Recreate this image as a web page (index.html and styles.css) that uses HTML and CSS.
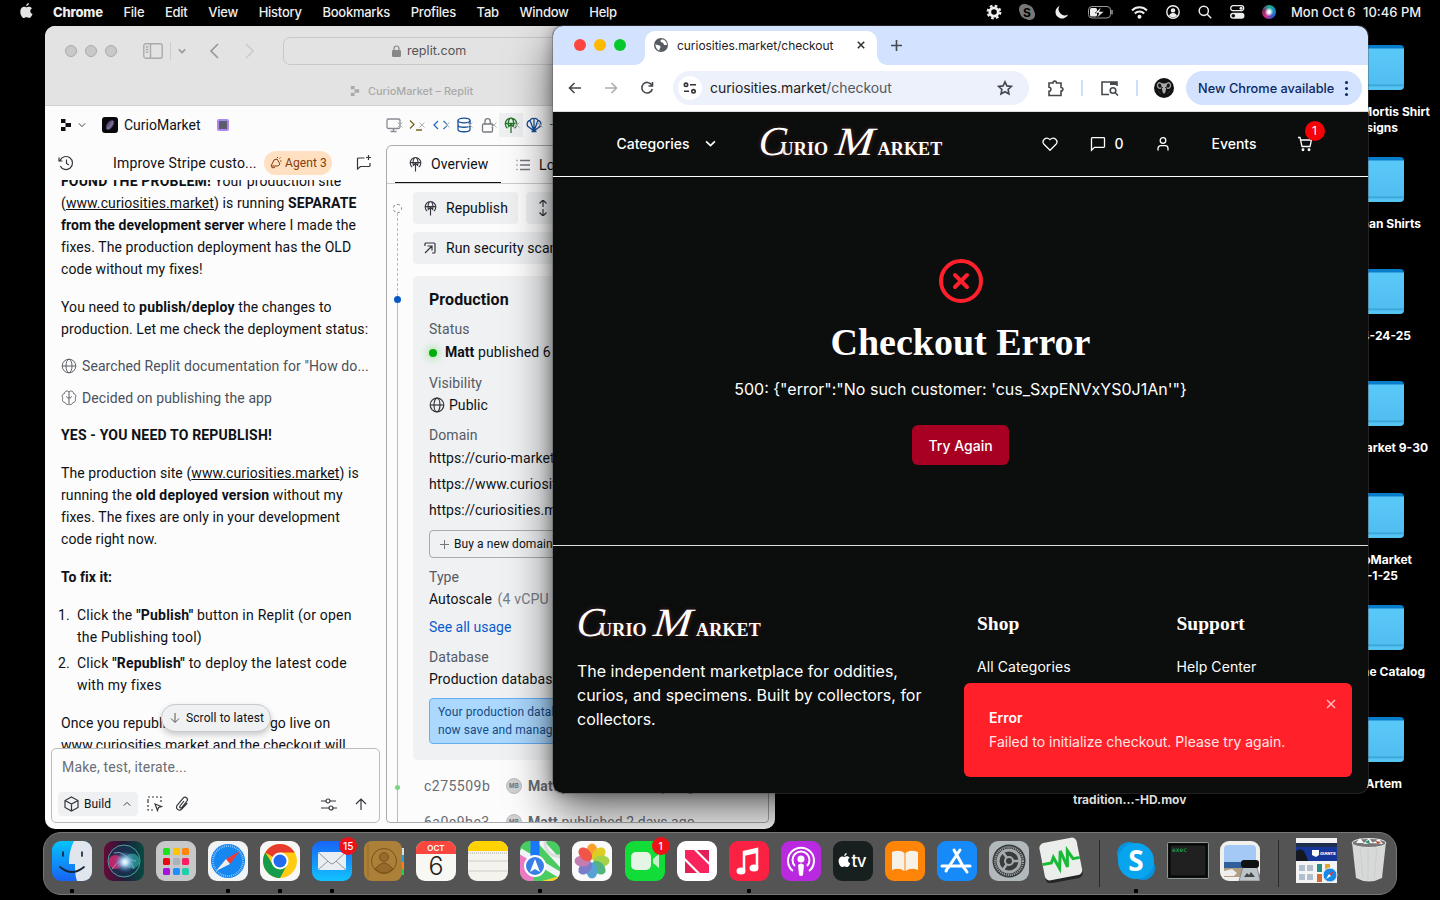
FILE: index.html
```html
<!DOCTYPE html>
<html lang="en">
<head>
<meta charset="utf-8">
<title>Desktop</title>
<link rel="stylesheet" href="styles.css">
</head>
<body>
<svg class="defs" width="0" height="0">
  <defs>
    <symbol id="apple" viewBox="0 0 14 17"><path d="M9.6 0c.1 1.700-1.300 3.300-2.900 3.300C6.500 1.700 8 .2 9.600 0zM7 4.500c.6 0 1.500-.7 2.800-.7 1.300 0 2.500.7 3.100 1.700-2.700 1.600-2.200 5.200.6 6.200-.5 1.500-2 4.300-3.600 4.300-1.200 0-1.500-.7-2.800-.7s-1.700.7-2.800.7C2.300 16 .3 12.300.3 9.200c0-3.300 2.100-5.300 4.200-5.300 1.200 0 2 .6 2.500.6z" fill="currentColor"/></symbol>
    <symbol id="chev" viewBox="0 0 10 10"><path d="M1 3l4 4 4-4"/></symbol>
    <symbol id="x" viewBox="0 0 10 10"><path d="M1 1l8 8M9 1l-8 8"/></symbol>
    <symbol id="globe" viewBox="0 0 16 16"><circle cx="8" cy="8" r="6.800"/><ellipse cx="8" cy="8" rx="3" ry="6.800"/><path d="M1.200 8h13.600"/></symbol>
    <symbol id="deploy" viewBox="0 0 16 16"><path d="M4.500 11.300A5.700 5.700 0 1 1 11.500 11.300M8 16V7.500M5.300 10l2.700-2.700 2.700 2.700M2.300 6.500h11.400M5.600 9C4.600 4.500 6.500 1 8 1s3.400 3.500 2.400 8"/></symbol>
    <symbol id="replit" viewBox="0 0 12 14"><path d="M1 1h4.500v4H1zM5.500 5H11v4H5.500zM1 9h4.500v4H1z" fill="currentColor"/></symbol>
  </defs>
</svg>

<header class="menubar">
  <svg class="apple" width="13" height="16"><use href="#apple"/></svg>
  <nav class="menus"><b>Chrome</b><span>File</span><span>Edit</span><span>View</span><span>History</span><span>Bookmarks</span><span>Profiles</span><span>Tab</span><span>Window</span><span>Help</span></nav>
  <div class="status">
    <svg width="16" height="16" viewBox="0 0 16 16"><circle cx="8" cy="8" r="4.200" fill="none" stroke="#eee" stroke-width="2.800"/><circle cx="8" cy="8" r="6.300" fill="none" stroke="#eee" stroke-width="2.200" stroke-dasharray="2.600 2.350"/></svg>
    <svg width="16" height="16" viewBox="0 0 16 16"><rect width="11" height="11" rx="5" fill="#777"/><rect x="5" y="5" width="11" height="11" rx="5" fill="#777"/><circle cx="8" cy="8" r="7" fill="#777"/><text x="8" y="12.500" text-anchor="middle" font-family="Inter" font-weight="700" font-size="12" fill="#000">S</text></svg>
    <svg width="14" height="14" viewBox="0 0 14 14"><path d="M4.500 1A6.500 6.500 0 1 0 13 9.500 6.200 6.200 0 0 1 4.500 1z" fill="#eee"/></svg>
    <svg width="26" height="13" viewBox="0 0 26 13"><rect x=".5" y=".5" width="22" height="11.500" rx="3.500" fill="none" stroke="#999"/><rect x="2" y="2" width="7" height="8.500" rx="1.500" fill="#eee"/><path d="M13 1L7 7h4l-2 5 7-6.500h-4.500z" fill="#eee" stroke="#000" stroke-width=".5"/><path d="M24 4v4.500" stroke="#999" stroke-width="1.500"/></svg>
    <svg width="17" height="13" viewBox="0 0 17 13" fill="none" stroke="#eee" stroke-width="2"><path d="M1 4.500a10.500 10.500 0 0 1 15 0M3.800 7.500a6.500 6.500 0 0 1 9.400 0"/><circle cx="8.500" cy="10.800" r="1"/></svg>
    <svg width="14" height="14" viewBox="0 0 14 14"><g fill="#eee"><circle cx="7" cy="7" r="6.200" fill="none" stroke="#eee" stroke-width="1.400"/><circle cx="7" cy="5.400" r="2.200"/><path d="M3 10.800a4.200 4.200 0 0 1 8 0A6 6 0 0 1 3 10.800z"/></g></svg>
    <svg width="14" height="14" viewBox="0 0 14 14" fill="none" stroke="#eee" stroke-width="1.500"><circle cx="5.800" cy="5.800" r="4.600"/><path d="M9.200 9.200l4 4"/></svg>
    <svg width="15" height="14" viewBox="0 0 15 14"><rect x=".7" y=".7" width="13" height="5" rx="2.500" fill="none" stroke="#eee" stroke-width="1.300"/><circle cx="11" cy="3.200" r="1.500" fill="#eee"/><rect y="7.800" width="14.500" height="6" rx="3" fill="#eee"/><circle cx="3.300" cy="10.800" r="1.800" fill="#111"/></svg>
    <i class="siri"></i>
  </div>
  <span class="date">Mon Oct 6</span><span class="clock">10:46 PM</span>
</header>

<!-- desktop items -->
<div class="folders">
  <div class="item"><i></i><span style="margin-right:10px">Mortis Shirt</span><span style="margin-right:42px">Designs</span></div>
  <div class="item"><i></i><span style="margin-right:19px">Urban Shirts</span></div>
  <div class="item"><i></i><span style="margin-right:29px">4-24-25</span></div>
  <div class="item"><i></i><span style="margin-right:12px">Market 9-30</span></div>
  <div class="item"><i></i><span style="margin-right:28px">CurioMarket</span><span style="margin-right:42px">10-1-25</span></div>
  <div class="item"><i></i><span style="margin-right:15px">The Catalog</span></div>
  <div class="item"><i></i><span style="margin-right:38px">Artem</span></div>
</div>
<div class="file-label">tradition...-HD.mov</div>

<section class="safari">
  <div class="s-chrome">
    <div class="s-bar">
      <div class="s-lights"><i></i><i></i><i></i></div>
      <svg class="s-side" width="20" height="16" viewBox="0 0 20 16" fill="none" stroke="#aaa" stroke-width="1.400"><rect x=".8" y=".8" width="18.400" height="14.400" rx="2"/><path d="M7.500 1v14M2.800 4h2.500M2.800 6.500h2.500M2.800 9h2.500" /></svg>
      <i class="s-div"></i>
      <svg class="s-chev" width="8" height="8" stroke="#999"><use href="#chev"/></svg>
      <svg class="s-back" width="10" height="16" viewBox="0 0 10 16"><path d="M9 1L2 8l7 7" fill="none" stroke="#999" stroke-width="1.700"/></svg>
      <svg class="s-fwd" width="10" height="16" viewBox="0 0 10 16"><path d="M1 1l7 7-7 7" fill="none" stroke="#ccc" stroke-width="1.700"/></svg>
      <div class="s-url"><svg width="9" height="12" viewBox="0 0 9 12"><rect y="5" width="9" height="7" rx="1.300" fill="#888"/><path d="M2 6V3.500a2.500 2.500 0 0 1 5 0V6" fill="none" stroke="#888" stroke-width="1.200"/></svg>replit.com</div>
    </div>
    <div class="s-tab"><svg width="10" height="12"><use href="#replit"/></svg>CurioMarket – Replit</div>
  </div>
  <div class="r-top">
    <svg class="r-logo" width="12" height="14"><use href="#replit"/></svg>
    <svg class="r-chev ln" width="8" height="8"><use href="#chev"/></svg>
    <svg class="r-app" width="16" height="16" viewBox="0 0 16 16"><rect width="16" height="16" rx="3" fill="#08080c"/><ellipse cx="8" cy="8" rx="3" ry="5.500" transform="rotate(35 8 8)" fill="#5b4c78"/><path d="M5 12L11 4M6.500 12l4.700-6" stroke="#a99bc5" stroke-width=".6"/></svg>
    <span class="r-name">CurioMarket</span><i class="r-square"></i>
    <div class="r-tools">
      <svg width="16" height="16" viewBox="0 0 16 16" stroke="#888b92"><rect x="1" y="2" width="13" height="9.500" rx="1.500"/><path d="M7.500 11.500v3M4.500 14.500h6"/><path class="mx" d="M11.500 5.500l5 5M16.500 5.500l-5 5"/></svg>
      <svg width="16" height="16" viewBox="0 0 16 16" stroke="#746421"><path d="M1 3.500l4 4-4 4M7 13h6"/><path class="mx" d="M10.500 5.500l5 5M15.500 5.500l-5 5"/></svg>
      <svg width="16" height="16" viewBox="0 0 16 16" stroke="#286bbd"><path d="M5 4L1 8l4 4M10.500 4l4 4-4 4"/><path class="mx" d="M11.500 5.500l5 5M16.500 5.500l-5 5"/></svg>
      <svg width="16" height="16" viewBox="0 0 16 16" stroke="#174f99"><ellipse cx="8" cy="3.500" rx="6" ry="2.300"/><path d="M2 3.500v9c0 3 12 3 12 0v-9M2 8c0 3 12 3 12 0"/><path class="mx" d="M11.500 5.500l5 5M16.500 5.500l-5 5"/></svg>
      <svg width="16" height="16" viewBox="0 0 16 16" stroke="#777a80"><rect x="2.500" y="7" width="10" height="8" rx="1.200"/><path d="M5 7V4.200a2.600 2.600 0 0 1 5.200 0V7"/><path class="mx" d="M11.500 5.500l5 5M16.500 5.500l-5 5"/></svg>
      <svg class="on" width="16" height="16" stroke="#26752b"><use href="#deploy"/><path class="mx" d="M11.500 5.500l5 5M16.500 5.500l-5 5"/></svg>
      <svg width="16" height="16" viewBox="0 0 16 16" stroke="#174f99"><path d="M8 14L1.500 9C.5 6 2 3.500 4 3.500 5 1.500 7 1 8 1.800c1-.8 3-.3 4 1.700 2 0 3.500 2.500 2.500 5.500zM8 14V2M8 14L4.200 4M8 14l3.800-10M5.500 14.500h5"/><path class="mx" d="M11.500 5.500l5 5M16.500 5.500l-5 5"/></svg>
      <span class="dash"></span>
    </div>
  </div>
  <div class="r-main">
    <div class="agent">
      <div class="a-head">
        <svg class="ln" width="16" height="16" viewBox="0 0 16 16"><path d="M2 5.500A6.500 6.500 0 1 1 2.200 11M1 2.500v3.500h3.500M8.500 4.500V8.500l2.500 1.500"/></svg>
        <span class="a-title">Improve Stripe custo...</span>
        <span class="a-pill"><svg width="13" height="13" viewBox="0 0 13 13"><path d="M2 10L5 4l3-1 3 5-2 2zM2 10.500l2 1.500 2-1M8 1l1 1M10.500 2.500l1-1M11 5h1.500"/></svg>Agent 3</span>
        <svg class="ln a-new" width="16" height="16" viewBox="0 0 16 16"><path d="M8.500 3H2.500a1 1 0 0 0-1 1v10l3-2.500H13a1 1 0 0 0 1-1V8M12.500 0v5M10 2.500h5"/></svg>
      </div>
      <div class="chat">
        <p class="first"><b>FOUND THE PROBLEM!</b> Your production site<br>(<u>www.curiosities.market</u>) is running <b class="tight">SEPARATE<br>from the development server</b> where I made the<br>fixes. The production deployment has the OLD<br>code without my fixes!</p>
        <p>You need to <b>publish/deploy</b> the changes to<br>production. Let me check the deployment status:</p>
        <div class="act"><svg width="16" height="16"><use href="#globe"/></svg>Searched Replit documentation for "How do...</div>
        <div class="act"><svg width="16" height="16" viewBox="0 0 16 16"><path d="M8 2v12M8 2C6 0 3.500 1.500 3.500 3.500 1 4 .5 7 2 8c-1.500 2 0 4.500 2 4.500C5 15 7.500 15 8 14M8 2c2-2 4.500-.5 4.500 1.500C15 4 15.500 7 14 8c1.500 2 0 4.500-2 4.500-1 2.500-3.500 2.500-4 1.500M5.500 6.500c0 1 1 1.500 2.500 1.500s2.500-.5 2.500-1.500"/></svg>Decided on publishing the app</div>
        <p><b>YES - YOU NEED TO REPUBLISH!</b></p>
        <p>The production site (<u>www.curiosities.market</u>) is<br>running the <b>old deployed version</b> without my<br>fixes. The fixes are only in your development<br>code right now.</p>
        <p><b class="tight">To fix it:</b></p>
        <ol><li><i>1.</i><div>Click the <b>"Publish"</b> button in Replit (or open<br>the Publishing tool)</div></li><li><i>2.</i><div>Click <b>"Republish"</b> to deploy the latest code<br>with my fixes</div></li></ol>
        <p>Once you republish, the fixes will<span class="golive">go live on</span><br>www.curiosities.market and the checkout will</p>
      </div>
      <div class="scroll-pill"><svg width="10" height="10" viewBox="0 0 10 10"><path d="M5 0v9M1 5.500l4 4 4-4"/></svg>Scroll to latest</div>
      <div class="composer">
        <span class="ph">Make, test, iterate...</span>
        <div class="c-row">
          <span class="build"><svg class="ln" width="15" height="16" viewBox="0 0 15 16"><path d="M7.500 1L14 4.500v7L7.500 15 1 11.500v-7zM1 4.500L7.500 8 14 4.500M7.500 8v7"/></svg>Build<svg class="ln up" width="8" height="8"><use href="#chev"/></svg></span>
          <svg class="ln" width="16" height="16" viewBox="0 0 16 16"><path d="M1 5V1h13v5M1 5v9h5" stroke-dasharray="2 2"/><path d="M8 8l6.500 2.500-3 1-1 3z"/></svg>
          <svg class="ln clip" width="14" height="16" viewBox="0 0 14 16"><path d="M9 5L5 10c-1 1.500 1 2.700 2 1.300L12 5c1.500-2.500-1.700-5.500-4-2.700L2.300 9C0 12.500 4 16 7 12.800L12.300 7"/></svg>
          <svg class="ln sl" width="16" height="14" viewBox="0 0 16 14"><path d="M0 4h5M9 4h6M0 11h8M12 11h4"/><circle cx="7" cy="4" r="2"/><circle cx="10" cy="11" r="2"/></svg>
          <svg class="ln" width="12" height="12" viewBox="0 0 12 12"><path d="M6 12V1M1 6l5-5 5 5"/></svg>
        </div>
      </div>
    </div>
    <div class="pane">
      <div class="p-tabs"><div class="p-tab"><svg class="ln" width="15" height="16"><use href="#deploy"/></svg>Overview</div><div class="p-logs"><svg width="14" height="12" viewBox="0 0 14 12"><path d="M4 1.500h10M4 6h10M4 10.500h10" stroke="#73777d" stroke-width="1.500"/><path d="M0 1.500h2M0 6h2M0 10.500h2" stroke="#bbb" stroke-width="1.500"/></svg>Logs</div></div>
      <div class="p-body">
        <div class="rail"><i class="ring"></i><i class="dash-line"></i><i class="dot"></i><i class="solid"></i><i class="gdot"></i><i class="tail"></i></div>
        <div class="p-content">
          <div class="btns"><span class="gbtn"><svg class="ln" width="15" height="16"><use href="#deploy"/></svg>Republish</span><span class="gbtn adj"><svg class="ln" width="10" height="16" viewBox="0 0 10 16"><path d="M5 0v7M1.500 3.500L5 0l3.500 3.500M5 9v7M1.500 12.500L5 16l3.500-3.500"/></svg>Adjust settings</span></div>
          <div class="btns"><span class="gbtn wide"><svg class="ln" width="14" height="14" viewBox="0 0 14 14"><path d="M2 5V3a1 1 0 0 1 1-1h8a1 1 0 0 1 1 1v8a1 1 0 0 1-1 1H9M2 12l7-7M4.500 5H9v4.500"/></svg>Run security scan</span></div>
          <div class="card">
            <h3>Production</h3>
            <div class="lb m8">Status</div>
            <div class="m1"><i class="live"></i><b class="tight">Matt</b> published 6 hours ago</div>
            <div class="lb m9">Visibility</div>
            <div class="pub"><svg class="ln" width="16" height="16"><use href="#globe"/></svg>Public</div>
            <div class="lb m8">Domain</div>
            <div class="m1">https://curio-market.replit.app</div>
            <div class="m4">https://www.curiosities.market</div>
            <div class="m4">https://curiosities.market</div>
            <div class="buy"><svg width="9" height="9" viewBox="0 0 9 9"><path d="M4.500 0v9M0 4.500h9" stroke="#777"/></svg>Buy a new domain</div>
            <div class="lb m8">Type</div>
            <div>Autoscale <span class="dim">(4 vCPU / 8 GiB RAM)</span></div>
            <div class="link">See all usage</div>
            <div class="lb m8">Database</div>
            <div>Production database connected</div>
            <div class="info">Your production database can<br>now save and manage data</div>
          </div>
          <div class="hist"><span>c275509b</span><i>MB</i><div><b>Matt</b> published 21 days ago</div></div>
          <div class="hist"><span>6a0e9be3</span><i>MB</i><div><b>Matt</b> published 2 days ago</div></div>
        </div>
      </div>
    </div>
  </div>
</section>

<section class="chrome">
  <div class="tabs">
    <div class="lights"><i class="red"></i><i class="yel"></i><i class="grn"></i></div>
    <div class="tab"><svg width="14" height="14" viewBox="0 0 14 14"><circle cx="7" cy="7" r="7" fill="#565b61"/><path d="M8 1.500C6 1.500 6 4 8 4.500c2 0 1 2.500 3 2.500h2C13 4 11 1.500 8 1.500zM1.500 6c1 1.500 5 .5 5 3 0 1.500-1.500 1.500-1 3.500C3 12 1.300 9 1.500 6z" fill="#fff"/></svg><span>curiosities.market/checkout</span><svg class="tx" width="8" height="8"><use href="#x"/></svg></div>
    <svg class="plus" width="11" height="11" viewBox="0 0 11 11"><path d="M5.500 0v11M0 5.500h11"/></svg>
  </div>
  <div class="bar">
    <svg width="14" height="12" viewBox="0 0 14 12" stroke="#45484c"><path d="M13 6H1.500M6.500 1l-5 5 5 5"/></svg>
    <svg width="14" height="12" viewBox="0 0 14 12" stroke="#aaaeb2"><path d="M1 6h11.500M7.500 1l5 5-5 5"/></svg>
    <svg width="14" height="14" viewBox="0 0 14 14" stroke="#45484c"><path d="M11.700 4A5.300 5.300 0 1 0 12.300 8M12.500 1v4H8.500"/></svg>
    <div class="omni"><b><svg width="14" height="12" viewBox="0 0 14 12" stroke="#333"><circle cx="3" cy="2.800" r="1.700"/><path d="M7 2.800h6M1 9.300h5"/><circle cx="10.500" cy="9.300" r="1.700"/></svg></b><span>curiosities.market<em>/checkout</em></span><svg class="star" width="16" height="16" viewBox="0 0 16 16" stroke="#45484c"><path d="M8 1.800l1.900 4.100 4.500.5-3.300 3.100.9 4.500-4-2.300-4 2.300.9-4.500L1.600 6.400l4.500-.5z"/></svg></div>
    <svg width="17" height="17" viewBox="0 0 17 17" stroke="#45484c"><path d="M2 3h4c0-2.500 3.500-2.500 3.500 0H14v4.500c2.500 0 2.500 3.500 0 3.500v4.500H2v-4.300c2.500 0 2.500-4 0-4z"/></svg>
    <i class="sep"></i>
    <svg width="18" height="15" viewBox="0 0 18 15" stroke="#45484c"><path d="M8 13.500H1V1h15v4"/><path d="M9 2.500h7" stroke-width="3"/><circle cx="12" cy="9.500" r="2.800"/><path d="M14 11.500l3 3"/></svg>
    <i class="sep"></i>
    <svg class="av" width="20" height="20" viewBox="0 0 20 20"><circle cx="10" cy="10" r="10" fill="#111"/><path d="M3.500 7Q4 3.500 7 5.500q3 1.500 6 0 3-2 3.500 1.500 0 4-3.500 3M7 10Q3.500 11 3.500 7" fill="none" stroke="#999" stroke-width="1.500"/><path d="M7 6h6l-1.500 8L10 16l-1.500-2z" fill="#aaa"/><path d="M8 9l1 1M12 9l-1 1M4 13l3 3M16 13l-3 3" stroke="#333"/></svg>
    <div class="upd">New Chrome available<span><i></i><i></i><i></i></span></div>
  </div>
  <main class="page">
    <nav class="nav">
      <span class="cat">Categories</span><svg class="nchev" width="11" height="11"><use href="#chev"/></svg>
      <div class="logo"><i class="c">C</i><span class="urio">URIO</span><i class="m">M</i><span class="arket">ARKET</span></div>
      <svg class="heart" width="16" height="16" viewBox="0 0 16 16"><path d="M8 14.300L2 8.200C-.8 5 3.800-.4 8 3.600c4.200-4 8.800 1.400 6 4.600z"/></svg>
      <svg class="msg" width="16" height="16" viewBox="0 0 16 16"><path d="M1.500 14.200V2.500a.8.8 0 0 1 .8-.8h11.400a.8.800 0 0 1 .8.800v8a.8.8 0 0 1-.8.8H4.500z"/></svg>
      <span class="zero">0</span>
      <svg class="user" width="16" height="16" viewBox="0 0 16 16"><circle cx="8" cy="4.500" r="2.800"/><path d="M3 14.500v-2a2.800 2.800 0 0 1 2.800-2.800h4.400a2.800 2.800 0 0 1 2.800 2.800v2"/></svg>
      <span class="ev">Events</span>
      <div class="cart"><svg width="16" height="16" viewBox="0 0 16 16"><path d="M1 1.500h2l2 9h8l1.500-6.500H4"/><circle cx="6" cy="13.800" r=".8"/><circle cx="12" cy="13.800" r=".8"/></svg><b>1</b></div>
    </nav>
    <section class="err">
      <svg width="48" height="48" viewBox="0 0 24 24" fill="none" stroke="#ff202b" stroke-width="2" stroke-linecap="round"><circle cx="12" cy="12" r="10"/><path d="M15 9l-6 6M9 9l6 6"/></svg>
      <h1>Checkout Error</h1>
      <p>500: {"error":"No such customer: 'cus_SxpENVxYS0J1An'"}</p>
      <button>Try Again</button>
    </section>
    <footer class="foot">
      <div class="about"><div class="logo"><i class="c">C</i><span class="urio">URIO</span><i class="m">M</i><span class="arket">ARKET</span></div>
        <p>The independent marketplace for oddities,<br>curios, and specimens. Built by collectors, for<br>collectors.</p></div>
      <div class="col"><h4>Shop</h4><span>All Categories</span></div>
      <div class="col"><h4>Support</h4><span>Help Center</span></div>
    </footer>
    <div class="toast"><b>Error</b><span>Failed to initialize checkout. Please try again.</span><svg width="10" height="10"><use href="#x"/></svg></div>
  </main>
</section>

<footer class="dock">
  <div class="app run"><svg viewBox="0 0 40 40"><defs><linearGradient id="fb" x2="0" y2="1"><stop stop-color="#04c4fb"/><stop offset="1" stop-color="#1763f5"/></linearGradient><clipPath id="r"><rect width="40" height="40" rx="9"/></clipPath></defs><g clip-path="url(#r)"><path fill="url(#fb)" d="M0 0h40v40H0z"/><path d="M22 0c-4 8-5 15-5 23h6c0 6 0 12 2 17h15V0z" fill="#e1e6ee"/><path d="M8 26q12 10 24 0M11 11v4M30 11v4" fill="none" stroke="#17263a" stroke-width="1.700" stroke-linecap="round"/></g></svg></div>
  <div class="app"><svg viewBox="0 0 40 40"><defs><linearGradient id="sr"><stop stop-color="#660a39"/><stop offset=".5" stop-color="#221b38"/><stop offset="1" stop-color="#054b40"/></linearGradient><radialGradient id="sg"><stop stop-color="#fff"/><stop offset=".3" stop-color="#acd7ef"/><stop offset="1" stop-color="#426fba" stop-opacity="0"/></radialGradient></defs><rect width="40" height="40" rx="9" fill="url(#sr)"/><circle cx="20" cy="20" r="16" fill="#123a59" fill-opacity=".6" stroke="#4ba3a0"/><circle cx="11.500" cy="21" r="7" fill="#e0286f" opacity=".8"/><circle cx="28" cy="20" r="7.500" fill="#28a394" opacity=".75"/><path d="M8 28q9-14 24-8M10 12q12-4 20 16" stroke="#a9c4e8" opacity=".7"/><circle cx="21" cy="21" r="11" fill="url(#sg)"/></svg></div>
  <div class="app"><svg viewBox="0 0 40 40"><rect width="40" height="40" rx="9" fill="#c7c8c9"/><g><rect x="7" y="7" width="7" height="7" rx="1.500" fill="#1be21d"/><rect x="17" y="7" width="7" height="7" rx="1.500" fill="#ffc400"/><rect x="26" y="7" width="7" height="7" rx="1.500" fill="#ff850c"/><rect x="7" y="17" width="7" height="7" rx="1.500" fill="#ea0712"/><rect x="17" y="17" width="7" height="7" rx="1.500" fill="#a9b2b6"/><rect x="26" y="17" width="7" height="7" rx="1.500" fill="#fa1d62"/><rect x="7" y="27" width="7" height="7" rx="1.500" fill="#a713dc"/><rect x="17" y="27" width="7" height="7" rx="1.500" fill="#208eff"/><rect x="26" y="27" width="7" height="7" rx="1.500" fill="#22cda9"/></g></svg></div>
  <div class="app run"><svg viewBox="0 0 40 40"><rect width="40" height="40" rx="9" fill="#f2f3f4"/><circle cx="20" cy="20" r="17" fill="#1687f0"/><circle cx="20" cy="20" r="15" fill="none" stroke="#bce3ff" stroke-width="2" stroke-dasharray=".6 1.360"/><path d="M32 10L22 23l-4-5z" fill="#f13a33"/><path d="M8 30L18 18l4 5z" fill="#eee"/></svg></div>
  <div class="app run"><svg viewBox="0 0 40 40"><rect width="40" height="40" rx="9" fill="#f7f7f7"/><circle cx="20" cy="20" r="17" fill="#ffcc13"/><path d="M20 20L5.300 11.500A17 17 0 0 1 34.700 11.500H20z" fill="#e73b2e"/><path d="M5.300 11.500A17 17 0 0 0 20 37l7-13-14 0z" fill="#159b4b"/><circle cx="20" cy="20" r="8.500" fill="#fff"/><circle cx="20" cy="20" r="6.500" fill="#226bee"/></svg></div>
  <div class="app run"><svg viewBox="0 0 40 40"><defs><linearGradient id="ml" x2="0" y2="1"><stop stop-color="#1764f6"/><stop offset="1" stop-color="#13c3ff"/></linearGradient></defs><rect width="40" height="40" rx="9" fill="url(#ml)"/><rect x="6" y="11" width="28" height="18" rx="2" fill="#e9eef3"/><path d="M7 12l11 10q2 2 4 0l11-10M7 28l9-8M33 28l-9-8" fill="none" stroke="#8d969f"/></svg><b>15</b></div>
  <div class="app"><svg viewBox="0 0 40 40"><path d="M36 7h5v7h-5z" fill="#ddd"/><path d="M36 14h5v7h-5z" fill="#289bdd"/><path d="M36 21h5v7h-5z" fill="#fa8020"/><path d="M36 28h5v6h-5z" fill="#29c953"/><rect width="38" height="40" rx="8" fill="#ad8039"/><path d="M4 3v34" stroke="#946928"/><g fill="#966a2c" stroke="#795219"><circle cx="20" cy="20" r="12.500" fill="none"/><circle cx="20" cy="16" r="4.500"/><path d="M11 28q9-12 18 0-9 8-18 0z"/></g></svg></div>
  <div class="app"><svg viewBox="0 0 40 40"><g clip-path="url(#r)"><path fill="#f7f7f4" d="M0 0h40v40H0z"/><path fill="#f94740" d="M0 0h40v13H0z"/></g><text x="20" y="9.500" text-anchor="middle" font-family="Inter" font-weight="600" font-size="8" fill="#fff">OCT</text><text x="20" y="33.500" text-anchor="middle" font-family="Inter" font-size="25" font-weight="300" fill="#222">6</text></svg></div>
  <div class="app"><svg viewBox="0 0 40 40"><g clip-path="url(#r)"><path fill="#f5f3ed" d="M0 0h40v40H0z"/><path fill="#ffd200" d="M0 0h40v10H0z"/><path d="M0 20h40M0 30h40" stroke="#ccc"/><path d="M0 12h40" stroke="#aaa" stroke-dasharray="1 1"/></g></svg></div>
  <div class="app run"><svg viewBox="0 0 40 40"><g clip-path="url(#r)"><path fill="#4bcc62" d="M0 0h40v40H0z"/><path d="M0 14l14 4v22H0z" fill="#ed79c5"/><path d="M0 10l40 24M20 0l22 24" stroke="#f1f4f4" stroke-width="6"/><circle cx="38" cy="2" r="13" fill="none" stroke="#ddd" stroke-width="3"/><path d="M15 0v20" stroke="#1977fc" stroke-width="9"/><path d="M22 40l18-5v5z" fill="#ffd12b"/></g><circle cx="15" cy="25" r="10" fill="#397fe8" stroke="#fff" stroke-width="2"/><path d="M15 18l5 13-5-3-5 3z" fill="#fff"/></svg></div>
  <div class="app"><svg viewBox="0 0 40 40"><rect width="40" height="40" rx="9" fill="#fafafa"/><g opacity=".9"><ellipse cx="20" cy="10.500" rx="5.500" ry="8" fill="#ff9816"/><ellipse cx="20" cy="10.500" rx="5.500" ry="8" fill="#dbc90d" transform="rotate(45 20 20)"/><ellipse cx="20" cy="10.500" rx="5.500" ry="8" fill="#9dce35" transform="rotate(90 20 20)"/><ellipse cx="20" cy="10.500" rx="5.500" ry="8" fill="#42ae71" transform="rotate(135 20 20)"/><ellipse cx="20" cy="10.500" rx="5.500" ry="8" fill="#4599d0" transform="rotate(180 20 20)"/><ellipse cx="20" cy="10.500" rx="5.500" ry="8" fill="#6d70c4" transform="rotate(225 20 20)"/><ellipse cx="20" cy="10.500" rx="5.500" ry="8" fill="#bf6fab" transform="rotate(270 20 20)"/><ellipse cx="20" cy="10.500" rx="5.500" ry="8" fill="#f04436" transform="rotate(315 20 20)"/></g></svg></div>
  <div class="app"><svg viewBox="0 0 40 40"><rect width="40" height="40" rx="9" fill="#12dc37"/><rect x="6" y="11" width="20" height="18" rx="5" fill="#e4f4e5"/><path d="M28 18l6-5v14l-6-5z" fill="#c9edcf"/></svg><b>1</b></div>
  <div class="app"><svg viewBox="0 0 40 40"><rect width="40" height="40" rx="9" fill="#fff"/><path d="M8 9h9l15 15v8h-9L8 17z" fill="#f9245d"/><path d="M20 9h12v12zM8 20v12h12z" fill="#e31f57"/></svg></div>
  <div class="app run"><svg viewBox="0 0 40 40"><rect width="40" height="40" rx="9" fill="#fb2142"/><path d="M15 29V11l13-3v18" fill="none" stroke="#fff" stroke-width="2.500"/><path d="M15 11l13-3v4l-13 3z" fill="#fff"/><ellipse cx="12" cy="30" rx="4.500" ry="3.500" fill="#fff"/><ellipse cx="25" cy="27" rx="4.500" ry="3.500" fill="#fff"/></svg></div>
  <div class="app"><svg viewBox="0 0 40 40"><rect width="40" height="40" rx="9" fill="#b829df"/><g fill="none" stroke="#fff" stroke-width="2"><path d="M12 30a13 13 0 1 1 16 0M14 25a8.500 8.500 0 1 1 12 0"/></g><circle cx="20" cy="18" r="3.500" fill="#fff"/><path d="M17 24q3-3 6 0l-1 10q-2 2-4 0z" fill="#fff"/></svg></div>
  <div class="app"><svg viewBox="0 0 40 40" color="#fff"><rect width="40" height="40" rx="9" fill="#17201f"/><svg x="5" y="12" width="13" height="15"><use href="#apple"/></svg><text x="18.500" y="26" font-family="Inter" font-weight="500" font-size="17" fill="#fff" textLength="15">tv</text></svg></div>
  <div class="app"><svg viewBox="0 0 40 40"><rect width="40" height="40" rx="9" fill="#ff8508"/><path d="M19.500 12q-5-4-12.500-1v18q7-3 12.500 1zM20.500 12q5-4 12.500-1v18q-7-3-12.500 1z" fill="#f7f1e8"/></svg></div>
  <div class="app"><svg viewBox="0 0 40 40"><rect width="40" height="40" rx="9" fill="#158af8"/><path d="M17 9l10 18M23 9L11 27M5 25h19M28 25h5M9 30l1-2M28 28l2 3" fill="none" stroke="#fff" stroke-width="3" stroke-linecap="round"/></svg></div>
  <div class="app"><svg viewBox="0 0 40 40"><rect width="40" height="40" rx="9" fill="#b2b9bc"/><circle cx="20" cy="20" r="16.500" fill="#393c3d"/><g fill="none" stroke="#a6aaac"><circle cx="20" cy="20" r="14" stroke-dasharray="1 1" stroke-width="2"/><circle cx="20" cy="20" r="11" stroke-width="3"/><circle cx="20" cy="20" r="4" stroke-width="2"/><path d="M24 20h8M18 17l-5-7M18 23l-5 7" stroke-width="2.500"/></g></svg></div>
  <div class="app"><svg class="big" viewBox="0 0 46 46"><g transform="rotate(-11 23 23)"><rect x="4" y="6" width="38" height="38" rx="5" fill="#252525"/><rect x="4" y="3" width="38" height="38" rx="5" fill="#eceeec"/><path d="M4 24h9l3-5 4 12 4-17 4 17 3-16 4 9h7" fill="none" stroke="#19ba35" stroke-width="3"/></g></svg></div>
  <i class="bar1"></i>
  <div class="app run"><svg viewBox="0 0 40 40"><circle cx="13" cy="13" r="12" fill="#0792dd"/><circle cx="27" cy="27" r="12" fill="#0792dd"/><circle cx="20" cy="20" r="18" fill="#08a4ee"/><text x="20" y="30" text-anchor="middle" font-family="Open Sans" font-weight="700" font-size="28" fill="#fff">S</text></svg></div>
  <div class="app"><svg class="big" viewBox="0 0 46 46"><rect x="2.500" y="5.500" width="41" height="36" rx="1" fill="#202020" stroke="#8f9898"/><rect x="4.500" y="7.500" width="37" height="32" fill="none" stroke="#050505" stroke-width="2"/><text x="7" y="15" font-family="DejaVu Sans Mono" font-size="6.300" fill="#10c55a">exec</text></svg></div>
  <div class="app"><svg viewBox="0 0 40 40"><rect width="40" height="40" rx="9" fill="#f2f0ec"/><rect x="4" y="4" width="32" height="32" rx="4" fill="#a4c9f6"/><path d="M4 21h32v6H4z" fill="#315f9b"/><path d="M4 27h32v9H4z" fill="#b09d82"/><path d="M4 30l8-2 5 4-3 3H4z" fill="#eee"/><path d="M23 26h14l3 14H19z" fill="#bdc4c7" stroke="#858b90"/><rect x="21" y="19" width="18" height="8" rx="3" fill="#111"/><path d="M24 36l3-4 2 2 2-3 4 5z" fill="#444"/></svg></div>
  <i class="bar2"></i>
  <div class="app"><svg class="big" viewBox="0 0 46 46"><path fill="#f4f4f5" d="M2 1h41v45H2z"/><path fill="#202f4b" d="M2 6h41v4H2z"/><path fill="#17369a" d="M2 10h41v14H2z"/><path d="M2 14q8-6 12 10H2z" fill="#15191f"/><path d="M18 13h7v5l-3 2-4-2z" fill="#fff"/><text x="26" y="18" font-size="4" font-family="Inter" font-weight="800" fill="#fff">GIANTS</text><g fill="#b2bfce"><path d="M5 28h6v6H5zM13 28h6v6h-6zM5 37h6v6H5zM13 37h6v6h-6z"/></g><path fill="#278e83" d="M23 27h5v8h-5z"/><path fill="#dfa62b" d="M31 27h5v8h-5z"/><path fill="#d86b33" d="M23 37h5v8h-5z"/><circle cx="36" cy="38" r="7" fill="#1489e7" stroke="#eee"/><path d="M40 34l-3 5-2-2z" fill="#e33"/><path d="M32 42l5-3-2-2z" fill="#fff"/></svg></div>
  <div class="app"><svg class="big" viewBox="0 0 46 46"><path d="M6 5h34l-4 36q-13 7-26 0z" fill="#d7d8d8"/><path d="M14 10l3 31M22 12v31M31 11l-3 31" stroke="#cccdcd"/><ellipse cx="23" cy="6" rx="17" ry="4.500" fill="#777" stroke="#e3e3e3"/><path d="M10 6l4-5 4 5zM17 7l6-6 4 5zM26 6l7-4 4 5z" fill="#f6f7f7"/><path d="M19 5l4-2 1 4z" fill="#258e64"/><path d="M29 4l3 3 3-2z" fill="#bd442b"/></svg></div>
</footer>
</body>
</html>
```
FILE: styles.css
```css
* { box-sizing: border-box; }
body { margin: 0; width: 1440px; height: 900px; overflow: hidden; background: #000; position: relative; font-family: Inter, sans-serif; font-size: 13px; }
svg { display: block; flex: none; fill: none; }
p, h1, h3, h4, ol { margin: 0; }
.defs { position: absolute; }
.ln { stroke: #33373d; stroke-width: 1.2; }

.menubar { display: flex; align-items: center; height: 24px; padding-left: 20px; color: #eee; font-size: 13px; font-weight: 500; white-space: nowrap; }
.apple { color: #e4e4e4; margin-top: -2px; }
.menus { display: flex; gap: 20.700px; margin: -1px 0 0 20px; width: 933px; letter-spacing: -.25px; }
.menus b { font-weight: 800; letter-spacing: -.2px; }
.status { display: flex; align-items: center; position: absolute; left: 986px; top: 4px; height: 16px; gap: 17px; }
.status svg:nth-child(3) { margin-left: 3px; }
.status svg:nth-child(4) { margin-left: 2px; }
.status svg:nth-child(6) { margin-left: 1px; }
.status svg:nth-child(7), .status svg:nth-child(8) { margin-left: .8px; }
.siri { width: 14px; height: 14px; border-radius: 50%; background: radial-gradient(circle, #fff 0 12%, transparent 45%), conic-gradient(#18ae8e, #168fca, #3656cc, #d43189, #7b2a64, #18ae8e); }
.date, .clock { position: absolute; top: 4px; }
.date { left: 1291px; }
.clock { left: 1363px; }

.folders { position: absolute; left: 1340px; top: 45px; width: 100px; }
.item { height: 112px; display: flex; flex-direction: column; align-items: flex-end; color: #fff; font-size: 12px; font-weight: 700; line-height: 16px; white-space: nowrap; }
.item i { width: 50px; height: 45px; margin: 0 36px 14px 0; border-radius: 4px; background: linear-gradient(#087dca 0 3px, #5ac8f8 4px, #50bef1 39px, #329fd3 40px, #55c4f3 42px); }
.file-label { position: absolute; left: 1073px; top: 792px; color: #ddd; font-size: 12px; font-weight: 700; line-height: 16px; }

.safari { position: absolute; left: 45px; top: 26px; width: 730px; height: 803px; border-radius: 10px; overflow: hidden; background: #fcfcfc; font-family: Roboto, sans-serif; font-size: 14px; line-height: 22px; color: #0e1116; white-space: nowrap; letter-spacing: .09px; }
.safari b { font-weight: 700; letter-spacing: .18px; }
.safari b.tight { letter-spacing: .05px; }
.s-chrome { height: 80px; background: #e3e3e3; border-bottom: 1px solid #d0d0d0; font-family: Inter, sans-serif; letter-spacing: 0; }
.s-bar { display: flex; align-items: center; height: 50px; padding-left: 20px; }
.s-lights { display: flex; gap: 8px; }
.s-lights i { width: 12px; height: 12px; border-radius: 50%; background: #c8c8c8; border: 1px solid #aaa; }
.s-side { margin-left: 26px; }
.s-div { width: 1px; height: 18px; background: #ccc; margin: 0 7px; }
.s-chev { stroke-width: 2; }
.s-back { margin-left: 23px; }
.s-fwd { margin-left: 26px; }
.s-url { margin-left: 28px; width: 420px; height: 28px; border: 1px solid #c8c8c8; border-radius: 7px; display: flex; align-items: center; gap: 6px; padding-left: 108px; color: #555; font-size: 12.600px; }
.s-tab { display: flex; align-items: center; gap: 8px; margin-left: 305px; height: 30px; color: #a9a9a9; font-size: 10.900px; font-weight: 500; }
.r-top { display: flex; align-items: center; height: 39px; padding: 0 0 2px 15px; }
.r-chev { margin-left: 6px; }
.r-app { margin-left: 16px; }
.r-name { margin-left: 6px; width: 77px; letter-spacing: 0; }
.r-square { width: 12px; height: 12px; background: #5b5e68; border: 2px solid #ac87f0; border-radius: 2px; margin-left: 16px; }
.r-tools { display: flex; align-items: center; margin-left: 157px; }
.r-tools svg { stroke-width: 1.3; margin: 6px 7.400px 6px 0; overflow: visible; }
.r-tools .mx { stroke: #aeb1b5; stroke-width: 1; }
.r-tools .on { background: #eef0f1; box-shadow: 0 0 0 4px #eef0f1; }
.dash { width: 10px; height: 1px; background: #26752b; }
.r-main { display: flex; height: 678px; }
.agent { width: 341px; padding-left: 6px; position: relative; }
.a-head { display: flex; align-items: center; height: 35px; padding-left: 7px; }
.a-title { margin-left: 39px; width: 151px; letter-spacing: .18px; }
.a-pill { height: 24px; width: 68px; border-radius: 12px; background: #ffe1c1; color: #853d0b; font-size: 12px; display: flex; align-items: center; gap: 3px; padding-left: 5px; }
.a-pill svg { stroke: #853d0b; }
.a-new { margin-left: 24px; }
.chat { height: 568px; overflow: hidden; padding-left: 10px; }
.chat p { margin-bottom: 16px; }
.chat .first { margin-top: -10px; }
.act { display: flex; gap: 5px; align-items: center; color: #4b505a; margin: -1px 0 11px; }
.act svg { stroke: #5c6068; }
.act + p { margin-top: 15px; }
.chat ol { padding: 0; list-style: none; margin-bottom: 16px; letter-spacing: .22px; }
.chat li { display: flex; margin-left: -3px; }
.chat li i { font-style: normal; width: 19px; }
.chat li + li { margin-top: 4px; }
.golive { margin-left: 4px; }
.scroll-pill { position: absolute; left: 116px; top: 559px; width: 110px; height: 28px; border: 1px solid #c7cacd; border-radius: 14px; background: #f0f1f2; box-shadow: 0 3px 6px #0003; display: flex; gap: 6px; align-items: center; padding-left: 8px; font-size: 12px; }
.scroll-pill svg { stroke: #555; }
.composer { width: 329px; height: 75px; border: 1px solid #b9bbbf; border-radius: 5px; padding: 7px 6px; background: #fcfcfc; }
.ph { color: #6a6e76; margin-left: 4px; display: block; letter-spacing: .17px; }
.c-row { display: flex; align-items: center; margin-top: 14px; padding-right: 6px; }
.c-row > svg { margin-left: 9px; }
.c-row .clip { margin-left: 12px; }
.c-row .sl { margin-left: auto; margin-right: 9px; }
.build { display: flex; align-items: center; width: 80px; height: 24px; border-radius: 4px; background: #eef0f2; font-size: 12px; padding-left: 6px; gap: 5px; }
.up { transform: rotate(180deg); margin-left: 7px; }
.pane { width: 383px; border: 1px solid #a9abae; border-radius: 6px 6px 4px 4px; overflow: hidden; }
.p-tabs { display: flex; height: 38px; border-bottom: 1px solid #ccc; padding-left: 8px; }
.p-tab { width: 106px; padding-left: 13px; display: flex; align-items: center; gap: 8px; border-bottom: 1px solid #111; height: 37px; }
.p-logs { display: flex; align-items: center; gap: 9px; margin-left: 15px; }
.p-body { display: flex; }
.rail { width: 26px; height: 660px; display: flex; flex-direction: column; align-items: center; padding: 20px 5px 0 0; }
.ring { width: 9px; height: 9px; border: 1px dashed #888; border-radius: 50%; }
.dash-line { height: 83px; border-left: 1px dashed #bbb; }
.dot { width: 7px; height: 7px; border-radius: 50%; background: #0658c5; }
.solid { width: 1px; height: 482px; background: #bbb; }
.gdot { width: 5px; height: 5px; border-radius: 50%; background: #7bd386; }
.tail { width: 1px; height: 40px; background: #bbb; }
.p-content { width: 356px; padding-top: 8px; }
.btns { display: flex; gap: 8px; margin-bottom: 8px; }
.gbtn { height: 32px; width: 105px; background: #eff0f2; border-radius: 4px; display: flex; align-items: center; padding-left: 10px; gap: 8px; }
.adj { width: 160px; padding-left: 12px; }
.wide { width: 170px; gap: 9px; }
.card { margin-top: 12px; height: 484px; padding: 12px 16px 16px; background: #f0f1f3; border-radius: 5px; width: 340px; }
h3 { font-size: 16px; font-weight: 700; position: relative; top: 1px; }
.lb { color: #555a63; }
.m1 { margin-top: 1px; } .m4 { margin-top: 4px; } .m8 { margin-top: 8px; } .m9 { margin-top: 9px; }
.live { display: inline-block; width: 8px; height: 8px; border-radius: 50%; background: #00ad0a; box-shadow: 0 0 7px 3px #8bdf8b88; margin-right: 8px; }
.pub { display: flex; gap: 4px; align-items: center; }
.buy { margin-top: 9px; height: 28px; width: 140px; border: 1px solid #a9abae; border-radius: 4px; display: flex; align-items: center; gap: 5px; padding-left: 10px; font-size: 12px; }
.dim { color: #777b83; margin-left: 2px; letter-spacing: .2px; }
.link { margin-top: 6px; color: #0a5bce; letter-spacing: 0; }
.info { margin-top: 8px; height: 46px; border: 1px solid #65adf5; border-radius: 4px; background: #abd8fe; color: #134c86; font-size: 12px; line-height: 18px; padding: 4px 8px; }
.hist { display: flex; align-items: center; height: 22px; margin: 15px 0 14px 11px; color: #676b72; }
.hist + .hist { margin-top: 14px; }
.hist span { width: 82px; letter-spacing: .5px; }
.hist i { width: 16px; height: 16px; border-radius: 50%; background: #d1d1d1; border: 1px solid #bbb; font: 600 6px/14px Inter; text-align: center; margin-right: 6px; }

.chrome { position: absolute; left: 553px; top: 26px; width: 815px; height: 767px; border-radius: 10px; background: #0b0e0d; overflow: clip; box-shadow: 0 0 0 1px #5556; white-space: nowrap; }
.safari::after { content: ""; position: absolute; left: 508px; top: 0; width: 815px; height: 767px; border-radius: 10px; box-shadow: 0 18px 45px #0009, 0 0 14px #0005; pointer-events: none; }
.tabs { height: 39px; background: #d3e2fe; display: flex; align-items: flex-end; }
.lights { display: flex; gap: 8px; padding: 0 0 14px 21px; width: 92px; }
.lights i { width: 12px; height: 12px; border-radius: 50%; }
.red { background: #fc453e; } .yel { background: #fcb900; } .grn { background: #05c92b; }
.tab { width: 232px; height: 34px; background: #fff; border-radius: 10px 10px 0 0; display: flex; align-items: center; padding: 0 12px 6px 9px; color: #1f2124; font-size: 12px; letter-spacing: -.04px; position: relative; }
.tab::before, .tab::after { content: ""; position: absolute; bottom: 0; width: 10px; height: 10px; }
.tab::before { left: -10px; background: radial-gradient(circle at 0 0, transparent 9.500px, #fff 10px); }
.tab::after { right: -10px; background: radial-gradient(circle at 100% 0, transparent 9.500px, #fff 10px); }
.tab span { margin-left: 9px; }
.tx { margin-left: auto; stroke: #333; stroke-width: 2; }
.plus { margin: 0 0 14px 14px; stroke: #45484c; stroke-width: 1.6; }
.bar { height: 47px; background: #fff; display: flex; align-items: center; padding-left: 15px; border-bottom: 1px solid #ddd; }
.bar svg { stroke-width: 1.600; }
.bar > svg:nth-child(2) { margin-left: 22px; }
.bar > svg:nth-child(3) { margin: 0 19px 0 22px; }
.omni { width: 356px; height: 34px; background: #ecf1fb; border-radius: 17px; display: flex; align-items: center; padding-left: 5px; font-size: 14px; letter-spacing: -.07px; color: #1f2124; margin-right: 18px; }
.omni span { margin-top: -1px; }
.omni b { width: 24px; height: 24px; border-radius: 50%; background: #fff; display: grid; place-items: center; margin-right: 8px; }
.omni em { font-style: normal; color: #55585c; }
.star { margin-left: auto; margin-right: 16px; }
.sep { width: 2px; height: 16px; background: #cce0fc; margin: 0 17.500px 0 17px; }
.bar .av { stroke-width: 1; margin-left: -1px; }
.upd { margin-left: 12px; width: 176px; height: 34px; border-radius: 17px; background: #d3e2fe; color: #0b2864; font-size: 12.750px; font-weight: 500; display: flex; align-items: center; padding-left: 12px; flex: none; }
.upd span { margin-left: auto; padding-right: 14px; display: flex; flex-direction: column; gap: 3px; }
.upd i { width: 3px; height: 3px; border-radius: 50%; background: #0b2864; }
.page { color: #fff; position: relative; }
.nav { height: 65px; border-bottom: 1px solid #fff; display: flex; align-items: center; padding: 0 0 1px 63.500px; font-size: 14px; font-weight: 500; }
.nav svg { stroke: #fff; stroke-width: 1.300; }
.nav .nchev { stroke-width: 1.500; }
.cat { width: 88px; }
.logo { height: 34px; width: 184px; display: flex; align-items: baseline; font: 19px/34px "Liberation Serif", serif; text-shadow: 0 0 5px #522; }
.nav .logo { margin-left: 43px; margin-right: 99px; margin-top: -5px; }
.logo .c { width: 22px; font-size: 41px; transform: skewX(-4deg); }
.logo .urio { width: 54px; letter-spacing: .2px; font-weight: 700; font-size: 18px; }
.logo .m { width: 43px; font-size: 40px; transform: translateX(4px) skewX(-6deg) scaleX(1.150); }
.logo .arket { letter-spacing: .2px; font-weight: 700; font-size: 18px; }
.msg { margin-left: 32px; }
.zero { margin-left: 9px; width: 9px; }
.user { margin-left: 31px; }
.ev { margin-left: 41px; }
.cart { margin-left: 40px; position: relative; }
.cart b { position: absolute; left: 8px; top: -15px; width: 20px; height: 20px; border-radius: 50%; background: #f30307; font-size: 12px; line-height: 20px; text-align: center; font-weight: 400; }
.err { height: 369px; border-bottom: 1px solid #ddd; display: flex; flex-direction: column; align-items: center; padding-top: 80px; }
h1 { font: 700 38px/40px "Liberation Serif", serif; margin: 17px 0 15px; }
.err p { font-size: 16px; line-height: 24px; }
.err button { margin-top: 24px; width: 97px; height: 40px; border: 0; border-radius: 6px; background: #a70023; color: #fff; font: 500 14px Inter; padding: 0; }
.foot { display: flex; padding: 59px 0 0 24px; }
.about { width: 400px; flex: none; }
.about p { font-size: 16px; line-height: 24px; margin-top: 20px; }
.col { width: 199.500px; flex: none; padding-top: 6px; display: flex; flex-direction: column; }
h4 { font: 700 19.500px/26px "Liberation Serif", serif; }
.col span { margin-top: 20px; font-size: 14px; line-height: 20px; letter-spacing: .08px; }
.toast { position: absolute; left: 411px; top: 571px; width: 388px; height: 94px; background: #ff202a; border-radius: 6px; padding: 25px; font-size: 14px; line-height: 20px; display: flex; flex-direction: column; gap: 4px; }
.toast b { font-weight: 600; }
.toast span { color: #ffe5e5; }
.toast svg { position: absolute; right: 16px; top: 16px; stroke: #ffc0c0; stroke-width: 1.400; }

.dock { position: absolute; left: 43px; top: 832px; width: 1354px; height: 63px; border-radius: 18px; border: 1px solid #777; background: #545454; display: flex; padding: 8px 0 0 2px; }
.app { width: 52.050px; height: 53px; position: relative; display: flex; justify-content: center; flex: none; }
.app > svg { width: 40px; height: 40px; }
.app > .big { width: 46px; height: 46px; margin-top: -4px; }
.app b { position: absolute; left: 33px; top: -4px; width: 18px; height: 18px; border-radius: 50%; background: #ed1218; color: #fff; font-size: 10px; line-height: 18px; text-align: center; font-weight: 500; }
.run::after { content: ""; position: absolute; top: 48px; left: 24px; width: 4px; height: 4px; border-radius: 1px; background: #000; }
.bar1, .bar2 { width: 1px; height: 47px; background: #292929; flex: none; margin: -1px 10px 0 12px; }
.bar2 { margin: -1px 12px 0 12px; }
```
